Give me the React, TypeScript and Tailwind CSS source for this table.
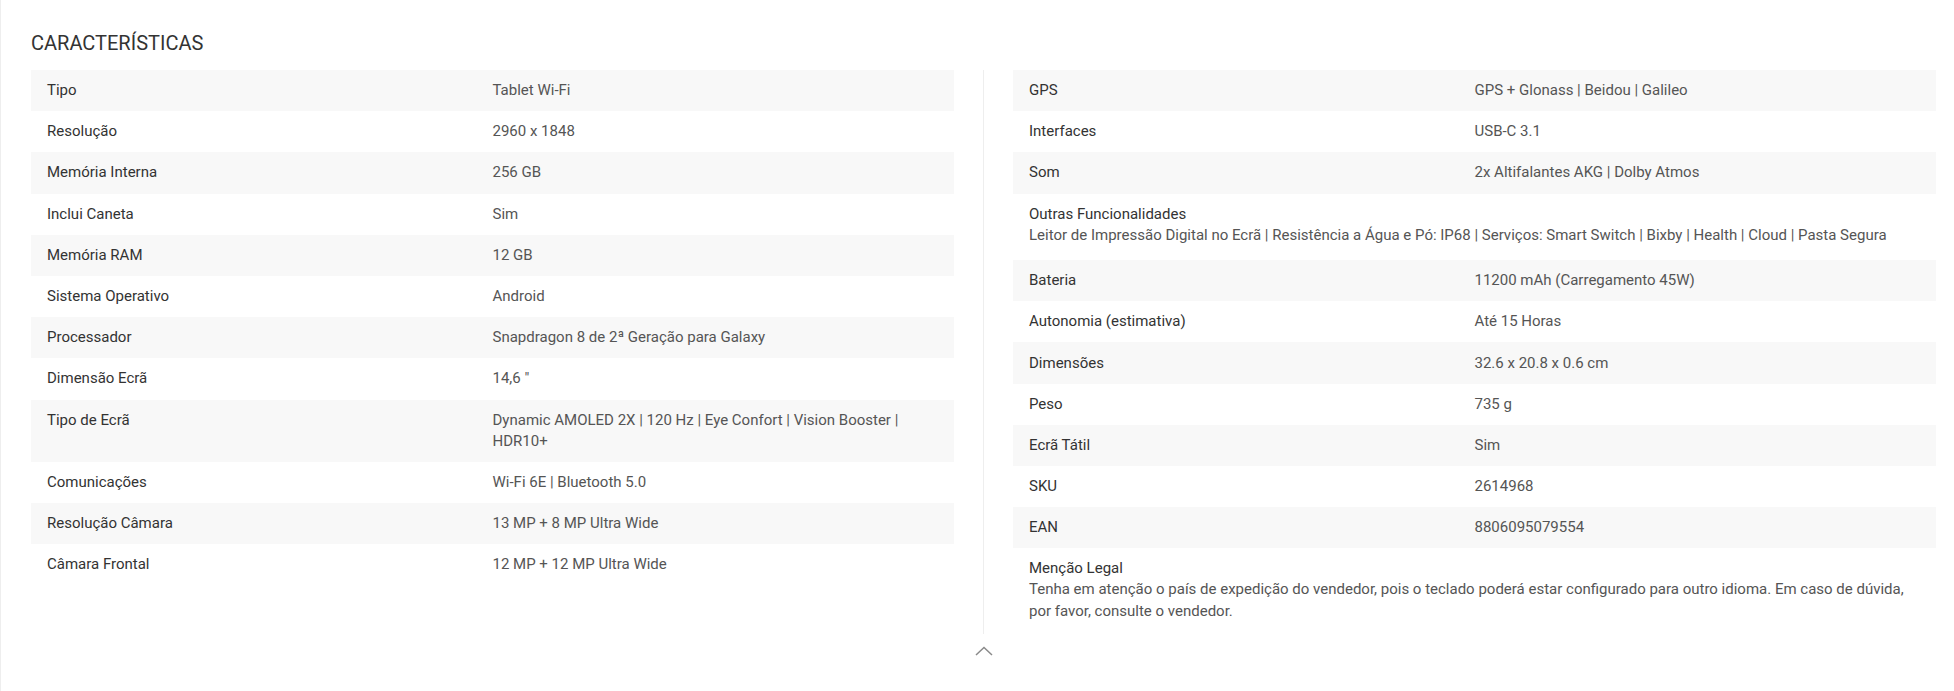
import React from 'react';

type Spec = { label: string; value: string; stacked?: boolean; last?: boolean };

const leftSpecs: Spec[] = [
  { label: 'Tipo', value: 'Tablet Wi-Fi' },
  { label: 'Resolução', value: '2960 x 1848' },
  { label: 'Memória Interna', value: '256 GB' },
  { label: 'Inclui Caneta', value: 'Sim' },
  { label: 'Memória RAM', value: '12 GB' },
  { label: 'Sistema Operativo', value: 'Android' },
  { label: 'Processador', value: 'Snapdragon 8 de 2ª Geração para Galaxy' },
  { label: 'Dimensão Ecrã', value: '14,6 "' },
  { label: 'Tipo de Ecrã', value: 'Dynamic AMOLED 2X | 120 Hz | Eye Confort | Vision Booster | HDR10+' },
  { label: 'Comunicações', value: 'Wi-Fi 6E | Bluetooth 5.0' },
  { label: 'Resolução Câmara', value: '13 MP + 8 MP Ultra Wide' },
  { label: 'Câmara Frontal', value: '12 MP + 12 MP Ultra Wide' },
];

const rightSpecs: Spec[] = [
  { label: 'GPS', value: 'GPS + Glonass | Beidou | Galileo' },
  { label: 'Interfaces', value: 'USB-C 3.1' },
  { label: 'Som', value: '2x Altifalantes AKG | Dolby Atmos' },
  {
    label: 'Outras Funcionalidades',
    value: 'Leitor de Impressão Digital no Ecrã | Resistência a Água e Pó: IP68 | Serviços: Smart Switch | Bixby | Health | Cloud | Pasta Segura',
    stacked: true,
  },
  { label: 'Bateria', value: '11200 mAh (Carregamento 45W)' },
  { label: 'Autonomia (estimativa)', value: 'Até 15 Horas' },
  { label: 'Dimensões', value: '32.6 x 20.8 x 0.6 cm' },
  { label: 'Peso', value: '735 g' },
  { label: 'Ecrã Tátil', value: 'Sim' },
  { label: 'SKU', value: '2614968' },
  { label: 'EAN', value: '8806095079554' },
  {
    label: 'Menção Legal',
    value: 'Tenha em atenção o país de expedição do vendedor, pois o teclado poderá estar configurado para outro idioma. Em caso de dúvida, por favor, consulte o vendedor.',
    stacked: true,
    last: true,
  },
];

const SpecRow: React.FC<{ spec: Spec; striped: boolean }> = ({ spec, striped }) => {
  const bg = striped ? 'bg-[#f8f8f8]' : 'bg-white';
  if (spec.stacked) {
    return (
      <div className={`${bg} px-4 pt-[10px] ${spec.last ? 'pb-[11px]' : 'pb-[14px]'}`}>
        <div className="text-[#333] leading-[21px]">{spec.label}</div>
        <div className="text-[#555] leading-[21.5px]">{spec.value}</div>
      </div>
    );
  }
  return (
    <div className={`${bg} grid grid-cols-2 py-[10.1px] leading-[21px]`}>
      <div className="pl-4 pr-4 text-[#333]">{spec.label}</div>
      <div className="pr-4 text-[#555]">{spec.value}</div>
    </div>
  );
};

const SpecList: React.FC<{ specs: Spec[] }> = ({ specs }) => (
  <div className="w-[923px] flex flex-col">
    {specs.map((s, i) => (
      <SpecRow key={s.label} spec={s} striped={i % 2 === 0} />
    ))}
  </div>
);

export default function App() {
  return (
    <div className="min-h-[691px] bg-white border-l border-[#eeeeee] pl-[30px] pr-[18px] pt-[28px] text-[15px] font-['Roboto',sans-serif]">
      <h2 className="text-[20px] leading-[30px] text-[#333] uppercase font-normal mb-[12px]">Características</h2>
      <div className="flex items-start gap-[29px]">
        <SpecList specs={leftSpecs} />
        <div className="w-px self-stretch bg-[#eeeeee] -mb-[1px]" />
        <SpecList specs={rightSpecs} />
      </div>
      <div className="flex justify-center pt-[13px] pl-px">
        <svg width="18" height="10" viewBox="0 0 18 10" fill="none" stroke="#8a8a8a" strokeWidth="1.5">
          <path d="M1 9 L9 1.5 L17 9" />
        </svg>
      </div>
    </div>
  );
}
